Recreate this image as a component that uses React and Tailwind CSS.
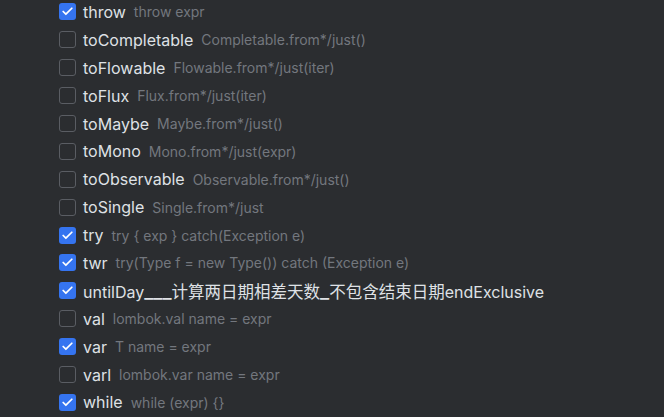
import { Check } from "lucide-react"

const ROWS = [
  { name: "throw", hint: "throw expr", on: true },
  { name: "toCompletable", hint: "Completable.from*/just()", on: false },
  { name: "toFlowable", hint: "Flowable.from*/just(iter)", on: false },
  { name: "toFlux", hint: "Flux.from*/just(iter)", on: false },
  { name: "toMaybe", hint: "Maybe.from*/just()", on: false },
  { name: "toMono", hint: "Mono.from*/just(expr)", on: false },
  { name: "toObservable", hint: "Observable.from*/just()", on: false },
  { name: "toSingle", hint: "Single.from*/just", on: false },
  { name: "try", hint: "try { exp } catch(Exception e)", on: true },
  { name: "twr", hint: "try(Type f = new Type()) catch (Exception e)", on: true },
  { name: "untilDay", hint: "", on: true, cjk: true },
  { name: "val", hint: "lombok.val name = expr", on: false },
  { name: "var", hint: "T name = expr", on: true },
  { name: "varl", hint: "lombok.var name = expr", on: false },
  { name: "while", hint: "while (expr) {}", on: true },
]

function Box({ on }) {
  if (on) {
    return (
      <div className="w-[17px] h-[17px] rounded-[3px] bg-[#3574f0] flex items-center justify-center shrink-0">
        <Check size={13} strokeWidth={3.2} color="#ffffff" />
      </div>
    )
  }
  return <div className="w-[17px] h-[17px] rounded-[3px] border border-[#5a5d63] shrink-0" />
}

function UntilDay() {
  return (
    <span className="ml-[7px] text-[16px] text-[#dfe1e5] leading-none">
      untilDay<span className="text-[20px]">___</span>
      <span className="text-[16.5px]">计算两日期相差天数</span>
      <span className="text-[20px]">_</span>
      <span className="text-[16.5px]">不包含结束日期</span>endExclusive
    </span>
  )
}

export default function App() {
  return (
    <div
      className="w-[664px] h-[417px] bg-[#2b2d30] overflow-hidden pl-[59px]"
      style={{ fontFamily: 'Inter, "Noto Sans CJK SC", sans-serif' }}
    >
      <div className="flex flex-col -mt-[2px]">
        {ROWS.map((r) => (
          <div key={r.name} className="h-[27.9px] flex items-center whitespace-nowrap">
            <Box on={r.on} />
            {r.cjk ? (
              <UntilDay />
            ) : (
              <span className="ml-[7px] text-[16px] text-[#dfe1e5]">{r.name}</span>
            )}
            {r.hint && <span className="ml-[8px] text-[14px] text-[#73777e]">{r.hint}</span>}
          </div>
        ))}
      </div>
    </div>
  )
}
